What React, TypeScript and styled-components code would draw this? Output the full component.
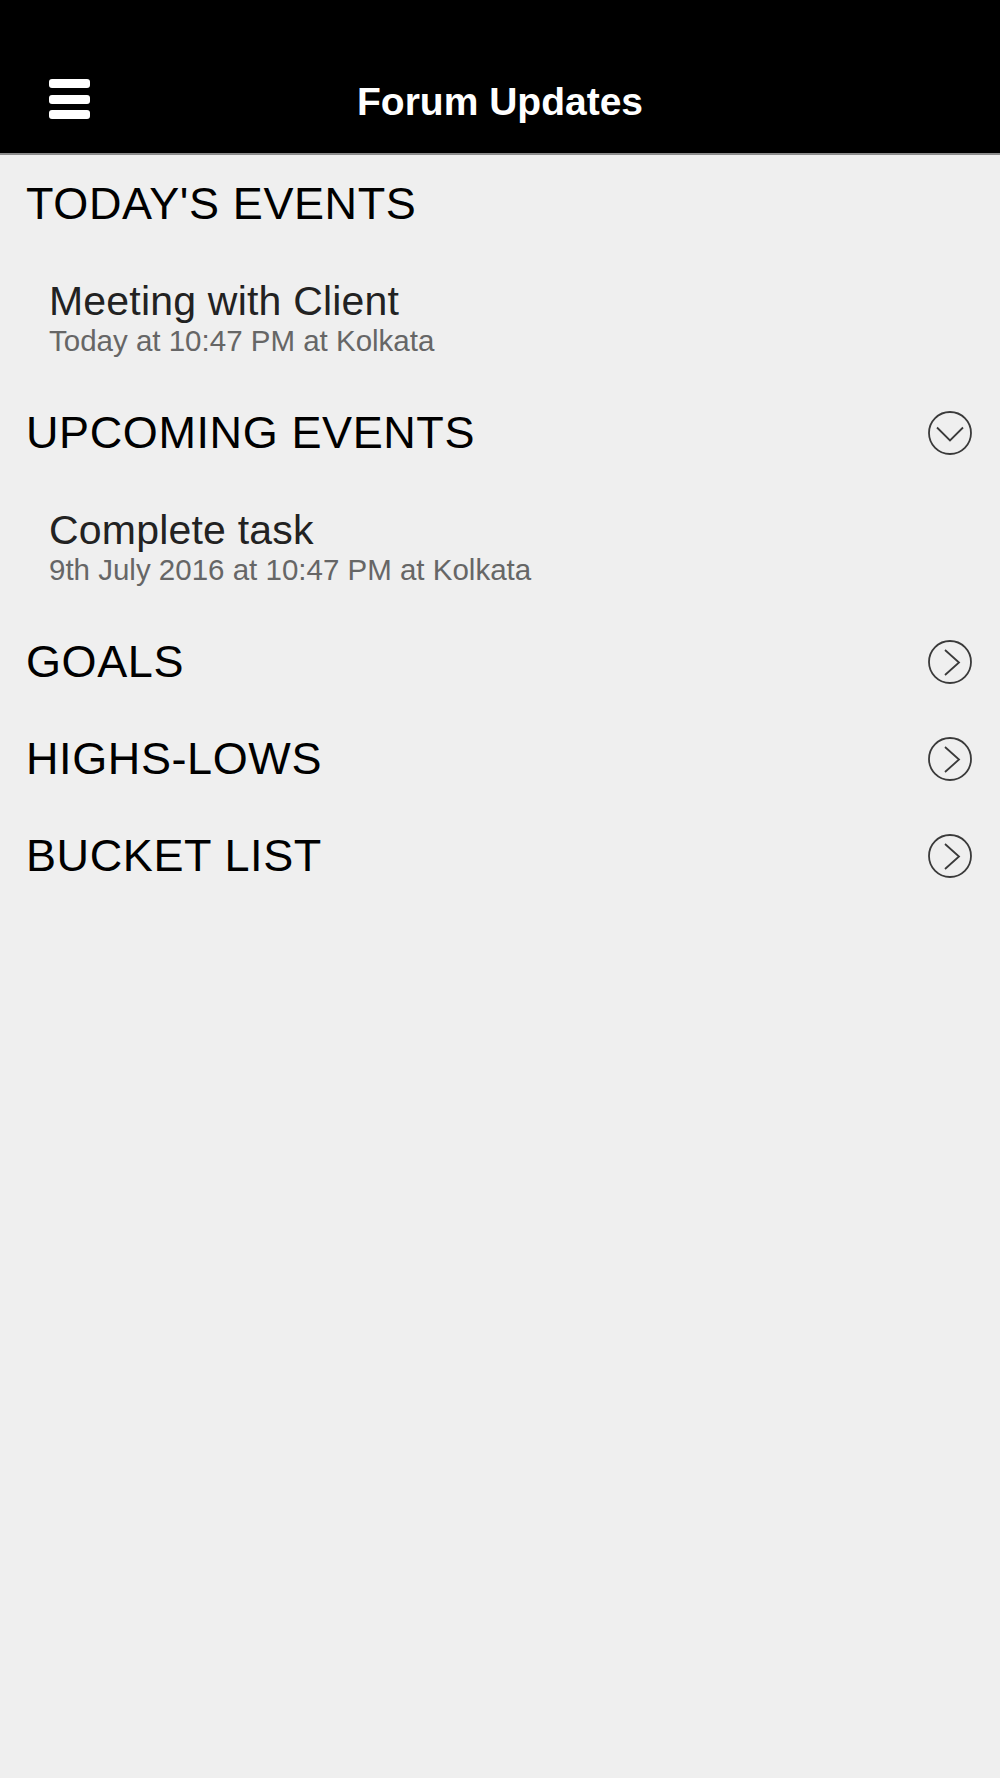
import styled, { createGlobalStyle } from 'styled-components';

const GlobalStyle = createGlobalStyle`
    html, body {
        margin: 0;
        padding: 0;
        background: #efefef;
        font-family: "Liberation Sans", Arial, sans-serif;
    }
    * {
        box-sizing: border-box;
    }
`;

const Screen = styled.div`
    width: 1000px;
    min-height: 1778px;
    background: #efefef;
`;

const NavBar = styled.header`
    height: 155px;
    background: #000;
    border-bottom: 2px solid #8c8c8c;
    display: grid;
    grid-template-columns: 1fr auto 1fr;
    align-items: start;
    padding: 79px 49px 0 49px;
`;

const MenuButton = styled.button`
    width: 41px;
    height: 40px;
    padding: 0;
    border: none;
    background: transparent;
    display: flex;
    flex-direction: column;
    justify-content: space-between;
    cursor: pointer;
`;

const MenuBar = styled.span`
    display: block;
    height: 9px;
    width: 100%;
    border-radius: 3px;
    background: #fff;
`;

const NavTitle = styled.h1`
    margin: 0;
    color: #fff;
    font-size: 39px;
    font-weight: 700;
    line-height: 45px;
    text-align: center;
`;

const SectionHeader = styled.div`
    height: 97px;
    display: flex;
    align-items: center;
    justify-content: space-between;
    padding: 0 28px 0 26px;
`;

const SectionTitle = styled.h2`
    margin: 0;
    font-size: 45px;
    font-weight: 400;
    letter-spacing: 0.6px;
    color: #000;
    line-height: 52px;
`;

const EventItem = styled.div`
    padding: 27px 26px 26px 49px;
`;

const EventTitle = styled.div`
    font-size: 41px;
    line-height: 45px;
    letter-spacing: 0.2px;
    color: #222;
`;

const EventMeta = styled.div`
    font-size: 29.5px;
    line-height: 34px;
    color: #666;
`;

const IconWrap = styled.svg`
    width: 44px;
    height: 44px;
    flex-shrink: 0;
`;

const CircleChevron = ({ direction }: { direction: 'down' | 'right' }) => (
    <IconWrap viewBox="0 0 44 44">
        <circle cx="22" cy="22" r="21" fill="none" stroke="#3a3a3a" strokeWidth="1.8" />
        {direction === 'down' ? (
            <polyline points="9,16.5 22,29.5 35,16.5" fill="none" stroke="#3a3a3a" strokeWidth="1.8" />
        ) : (
            <polyline points="17,10 31,22.5 17,35" fill="none" stroke="#3a3a3a" strokeWidth="1.8" />
        )}
    </IconWrap>
);

type Section = {
    title: string;
    icon?: 'down' | 'right';
    events?: { name: string; when: string }[];
};

const sections: Section[] = [
    { title: "TODAY'S EVENTS", events: [{ name: 'Meeting with Client', when: 'Today at 10:47 PM at Kolkata' }] },
    { title: 'UPCOMING EVENTS', icon: 'down', events: [{ name: 'Complete task', when: '9th July 2016 at 10:47 PM at Kolkata' }] },
    { title: 'GOALS', icon: 'right' },
    { title: 'HIGHS-LOWS', icon: 'right' },
    { title: 'BUCKET LIST', icon: 'right' },
];

const App = () => {
    return (
        <Screen>
            <GlobalStyle />
            <NavBar>
                <MenuButton aria-label="Menu">
                    <MenuBar />
                    <MenuBar />
                    <MenuBar />
                </MenuButton>
                <NavTitle>Forum Updates</NavTitle>
                <div />
            </NavBar>
            {sections.map(section => (
                <section key={section.title}>
                    <SectionHeader>
                        <SectionTitle>{section.title}</SectionTitle>
                        {section.icon && <CircleChevron direction={section.icon} />}
                    </SectionHeader>
                    {section.events?.map(ev => (
                        <EventItem key={ev.name}>
                            <EventTitle>{ev.name}</EventTitle>
                            <EventMeta>{ev.when}</EventMeta>
                        </EventItem>
                    ))}
                </section>
            ))}
        </Screen>
    );
};

export default App;
